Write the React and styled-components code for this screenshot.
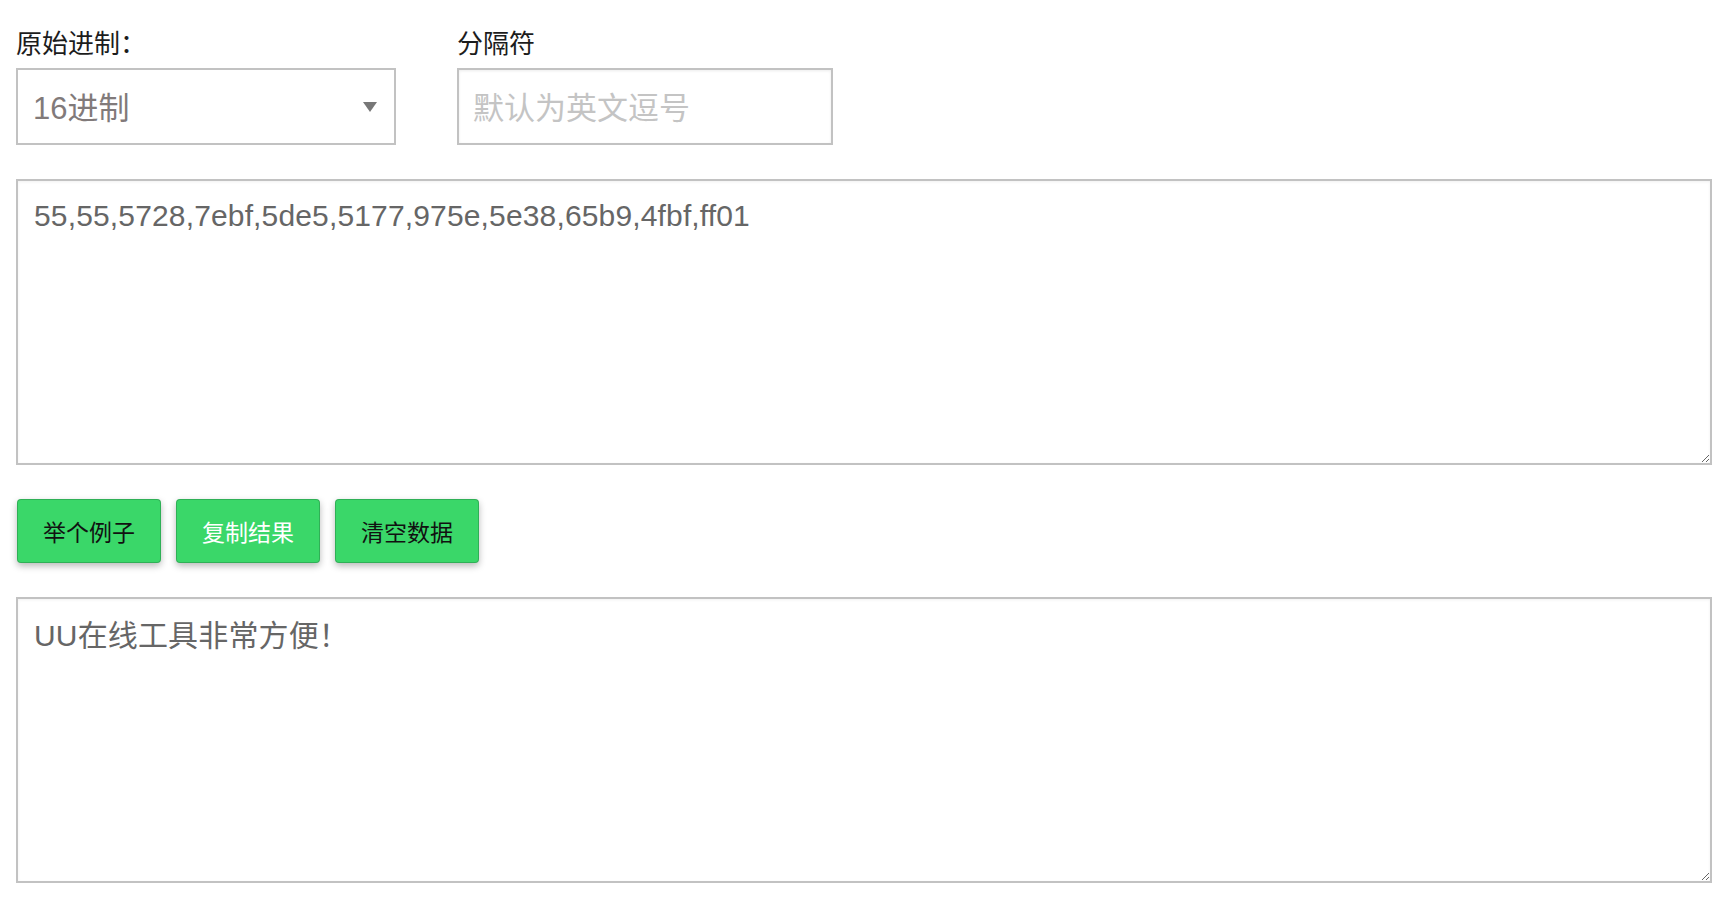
import React from "react";
import styled, { createGlobalStyle } from "styled-components";

const GlobalStyle = createGlobalStyle`
  html, body { margin: 0; padding: 0; background: #ffffff; }
  body { font-family: "Liberation Sans", "Noto Sans CJK SC", sans-serif; }
  * { box-sizing: border-box; }
`;

const Page = styled.div`
  display: flex;
  flex-direction: column;
  gap: 34px;
  padding: 24px 18px 34px 16px;
`;

const TopRow = styled.div`
  display: flex;
  gap: 61px;
  align-items: flex-start;
`;

const Field = styled.div`
  display: flex;
  flex-direction: column;
  gap: 8px;
  width: ${(p) => p.$w}px;
`;

const Label = styled.label`
  font-family: "Noto Sans CJK SC", sans-serif;
  font-size: 26px;
  line-height: 36px;
  color: #1c1c1c;
`;

const SelectBox = styled.div`
  position: relative;
  height: 77px;
  border: 2px solid #c2c2c2;
  background: #fff;
`;

const Select = styled.select`
  appearance: none;
  -webkit-appearance: none;
  border: none;
  outline: none;
  background: transparent;
  width: 100%;
  height: 100%;
  padding: 4px 15px 0;
  font-family: "Liberation Sans", "Noto Sans CJK SC", sans-serif;
  font-size: 31px;
  color: #817a7a;
`;

const Arrow = styled.span`
  position: absolute;
  right: 17px;
  top: 50%;
  transform: translateY(-50%);
  width: 0;
  height: 0;
  border-left: 7px solid transparent;
  border-right: 7px solid transparent;
  border-top: 10px solid #777;
  pointer-events: none;
`;

const Input = styled.input`
  height: 77px;
  width: 100%;
  border: 2px solid #c2c2c2;
  outline: none;
  padding: 4px 14px 0;
  font-family: "Liberation Sans", "Noto Sans CJK SC", sans-serif;
  font-size: 31px;
  color: #666;
  box-shadow: inset 0 1px 3px rgba(0, 0, 0, 0.08);
  &::placeholder {
    color: #c4c4c4;
  }
`;

const TextArea = styled.textarea`
  display: block;
  width: 100%;
  height: 286px;
  margin: 0;
  border: 2px solid #c2c2c2;
  outline: none;
  padding: ${(p) => p.$top}px 16px 15px;
  font-family: "Liberation Sans", "Noto Sans CJK SC", sans-serif;
  font-size: 30px;
  letter-spacing: 0.15px;
  line-height: 34px;
  color: #666666;
  background: #fff;
  box-shadow: inset 0 1px 3px rgba(0, 0, 0, 0.06);
`;

const ButtonRow = styled.div`
  display: flex;
  gap: 15px;
  padding-left: 1px;
`;

const Button = styled.button`
  width: 144px;
  height: 64px;
  border: 1px solid rgba(0, 0, 0, 0.18);
  border-radius: 4px;
  background: #3ad769;
  box-shadow: 0 3px 7px rgba(0, 0, 0, 0.28);
  font-family: "Noto Sans CJK SC", sans-serif;
  font-size: 23px;
  color: ${(p) => (p.$light ? "#ffffff" : "#111111")};
  cursor: pointer;
  padding: 0;
`;

export default function App() {
  return (
    <>
      <GlobalStyle />
      <Page>
        <TopRow>
          <Field $w={380}>
            <Label>原始进制：</Label>
            <SelectBox>
              <Select defaultValue="16">
                <option value="2">2进制</option>
                <option value="8">8进制</option>
                <option value="10">10进制</option>
                <option value="16">16进制</option>
              </Select>
              <Arrow />
            </SelectBox>
          </Field>
          <Field $w={376}>
            <Label>分隔符</Label>
            <Input placeholder="默认为英文逗号" />
          </Field>
        </TopRow>
        <TextArea $top={18} defaultValue="55,55,5728,7ebf,5de5,5177,975e,5e38,65b9,4fbf,ff01" />
        <ButtonRow>
          <Button>举个例子</Button>
          <Button $light>复制结果</Button>
          <Button>清空数据</Button>
        </ButtonRow>
        <TextArea $top={20} defaultValue="UU在线工具非常方便！" />
      </Page>
    </>
  );
}
